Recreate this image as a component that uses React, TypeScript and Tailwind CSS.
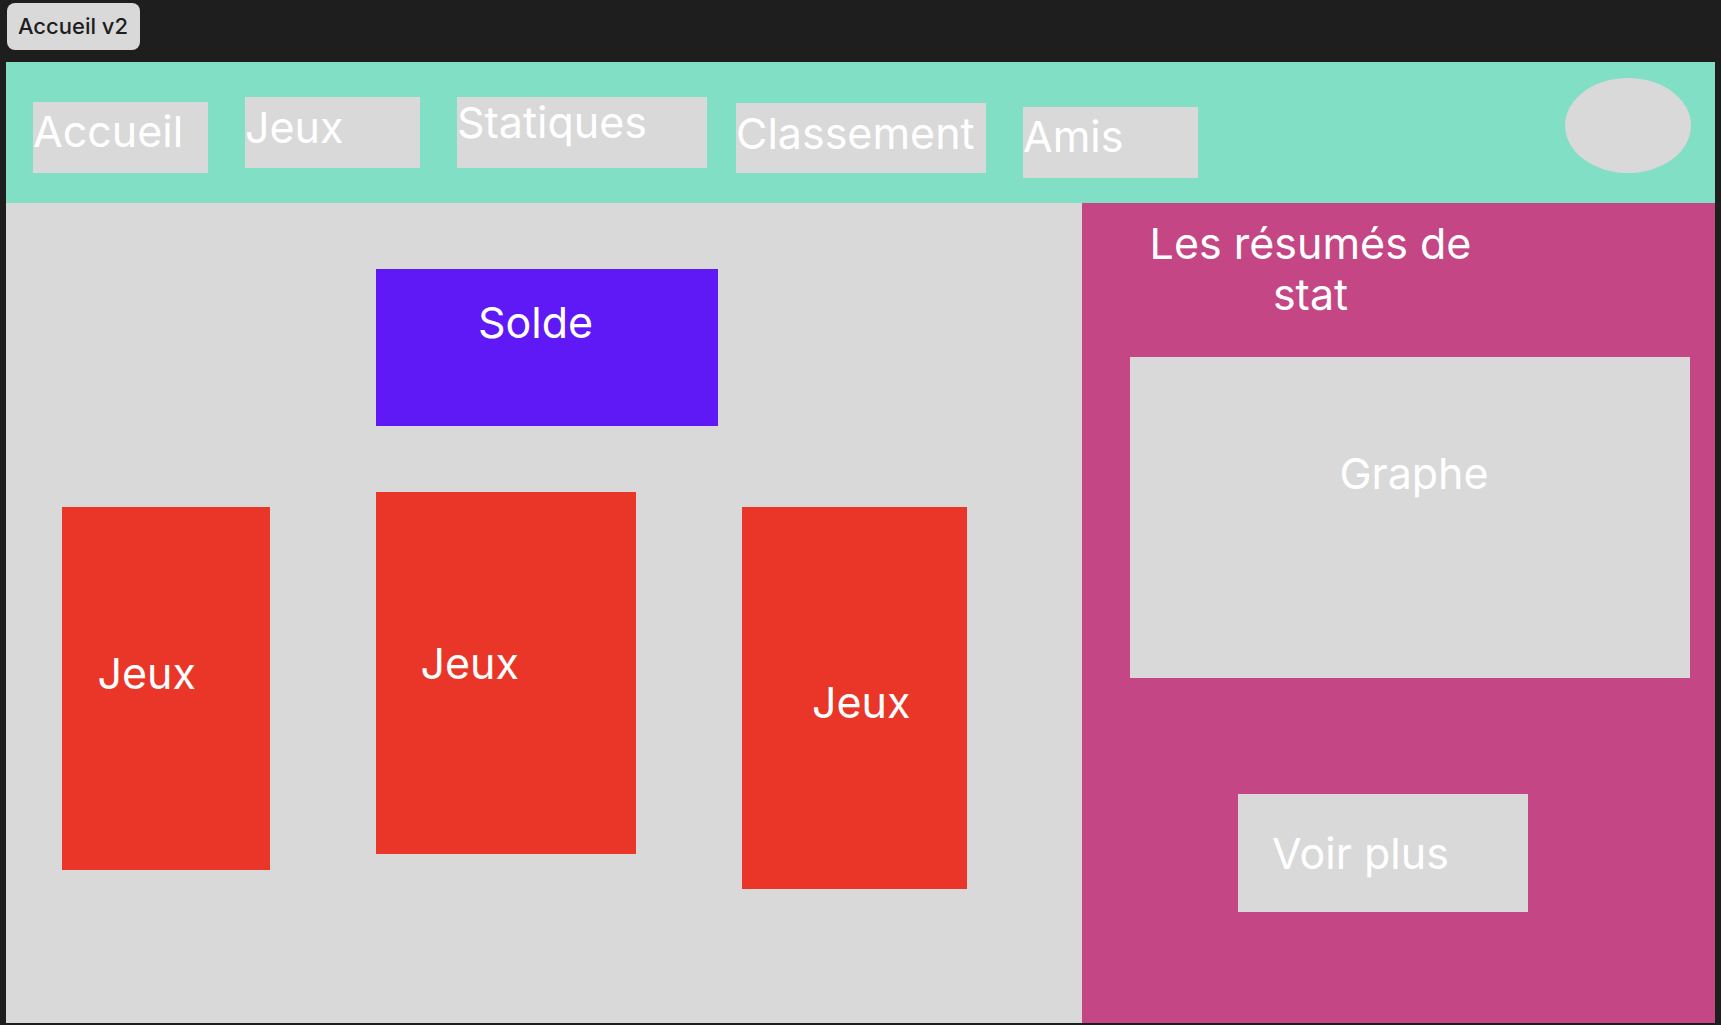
import React from 'react';

const font = { fontFamily: 'Inter, Roboto, "Noto Sans", sans-serif' };

const App = () => {
  return (
    <div className="w-full h-[1025px] overflow-hidden bg-[#1e1e1e]" style={font}>
      {/* Top bar */}
      <div className="h-[62px] pt-[3px] pl-[6.5px]">
        <div className="w-[133px] h-[47px] rounded-lg bg-[#d9d9d9] flex items-center justify-center text-[22px] font-medium text-[#1e1e1e]">
          Accueil v2
        </div>
      </div>

      {/* Frame */}
      <div className="ml-[6px] w-[1709px] h-[961px] flex flex-col">
        {/* Header */}
        <div className="h-[141px] bg-[#81dfc5] flex items-start text-white text-[43px] leading-none">
          <div className="ml-[27px] mt-[40px] w-[175px] h-[71px] bg-[#d9d9d9] pt-[8px]">Accueil</div>
          <div className="ml-[37px] mt-[35px] w-[175px] h-[71px] bg-[#d9d9d9] pt-[9px]">Jeux</div>
          <div className="ml-[37px] mt-[35px] w-[250px] h-[71px] bg-[#d9d9d9] pt-[4px]">Statiques</div>
          <div className="ml-[29px] mt-[41px] w-[250px] h-[70px] bg-[#d9d9d9] pt-[9px]">Classement</div>
          <div className="ml-[37px] mt-[45px] w-[175px] h-[71px] bg-[#d9d9d9] pt-[8px]">Amis</div>
          <div className="ml-auto mr-[24px] mt-[16px] w-[126px] h-[95px] rounded-[50%] bg-[#d9d9d9]" />
        </div>

        {/* Body */}
        <div className="flex flex-1 text-white text-[43px] leading-none">
          {/* Main */}
          <div className="w-[1076px] bg-[#d9d9d9] flex flex-col">
            <div className="ml-[370px] mt-[66px] w-[342px] h-[157px] bg-[#5f19f6] pl-[102px] pt-[32px]">
              Solde
            </div>
            <div className="flex items-start mt-[66px]">
              <div className="ml-[55.5px] mt-[15px] w-[208px] h-[363px] bg-[#e93629] pl-[36px] pt-[145px]">Jeux</div>
              <div className="ml-[106px] w-[260px] h-[362px] bg-[#e93629] pl-[45px] pt-[150px]">Jeux</div>
              <div className="ml-[106.5px] mt-[15px] w-[225px] h-[382px] bg-[#e93629] pl-[70px] pt-[174px]">Jeux</div>
            </div>
          </div>

          {/* Stats panel */}
          <div className="flex-1 bg-[#c54685] flex flex-col">
            <div className="ml-[48.5px] mt-[15px] w-[360px] text-center leading-[51px]">
              Les résumés de stat
            </div>
            <div className="ml-[48px] mt-[37px] w-[560px] h-[321px] bg-[#d9d9d9] text-center pl-[8px] pt-[95px]">
              Graphe
            </div>
            <div className="ml-[156px] mt-[116px] w-[290px] h-[118px] bg-[#d9d9d9] pl-[34px] pt-[38px]">
              Voir plus
            </div>
          </div>
        </div>
      </div>
    </div>
  );
};

export default App;
